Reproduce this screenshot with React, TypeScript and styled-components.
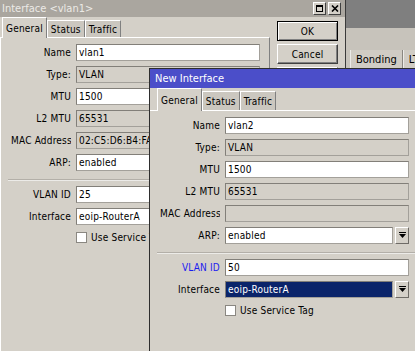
import React from "react"
import styled, { createGlobalStyle, css } from "styled-components"

const GlobalStyle = createGlobalStyle`
  html, body {
    margin: 0;
    padding: 0;
    overflow: hidden;
    background: #d4d0c8;
  }
  body {
    font-family: "DejaVu Sans Condensed", "DejaVu Sans", "Liberation Sans", sans-serif;
    font-stretch: condensed;
    font-size: 10px;
    letter-spacing: 0.2px;
    color: #000;
  }
`

const Desktop = styled.div`
  position: relative;
  width: 415px;
  height: 351px;
  overflow: hidden;
  background: #d4d0c8;
`

/* windows sit on the desktop at their own place */
const Window = styled.div<{ $x: number; $y: number; $w: number; $z: number; $active?: boolean }>`
  position: absolute;
  left: ${p => p.$x}px;
  top: ${p => p.$y}px;
  width: ${p => p.$w}px;
  bottom: 0;
  z-index: ${p => p.$z};
  display: flex;
  flex-direction: column;
  box-sizing: border-box;
  background: #d4d0c8;
  ${p =>
    p.$active
      ? css`
          border-left: 1px solid #2e2e2e;
          border-top: 1px solid #2e2e2e;
        `
      : css`
          border-right: 1px solid #3a3a3a;
        `}
`

const TitleBar = styled.div<{ $active?: boolean; $h: number }>`
  height: ${p => p.$h}px;
  flex: none;
  display: flex;
  align-items: center;
  font-size: 11px;
  letter-spacing: 0;
  white-space: nowrap;
  background: ${p => (p.$active ? "#4b4ec9" : "#aaa69f")};
  color: ${p => (p.$active ? "#ffffff" : "#eceae6")};
  padding-left: ${p => (p.$active ? 5 : 2)}px;
`

const TitleButtons = styled.div`
  margin-left: auto;
  margin-right: 4px;
  display: flex;
  gap: 2px;
`

const TitleButton = styled.div`
  width: 13px;
  height: 13px;
  box-sizing: border-box;
  background: #d4d0c8;
  border: 1px solid;
  border-color: #ffffff #404040 #404040 #ffffff;
  display: flex;
  align-items: center;
  justify-content: center;
`

const Body = styled.div`
  flex: 1;
  display: flex;
`

const TabArea = styled.div<{ $w?: number }>`
  display: flex;
  flex-direction: column;
  ${p => (p.$w ? `width: ${p.$w}px; flex: none;` : "flex: 1;")}
`

const TabRow = styled.div<{ $h: number; $pad: number }>`
  height: ${p => p.$h}px;
  display: flex;
  align-items: flex-end;
  padding-left: ${p => p.$pad}px;
`

const Tab = styled.div<{ $sel?: boolean; $h: number }>`
  box-sizing: border-box;
  height: ${p => (p.$sel ? p.$h + 1 : p.$h - 3)}px;
  margin-bottom: ${p => (p.$sel ? -1 : 0)}px;
  padding: 0 3px;
  display: flex;
  align-items: center;
  border: 1px solid;
  border-bottom: none;
  border-color: #ffffff #808080 #808080 #ffffff;
  background: ${p => (p.$sel ? "#d4d0c8" : "#cbc7bf")};
  position: relative;
  z-index: ${p => (p.$sel ? 1 : 0)};
  white-space: nowrap;
`

const Panel = styled.div<{ $edge?: boolean }>`
  flex: 1;
  border-top: 1px solid #ffffff;
  ${p =>
    p.$edge &&
    css`
      border-left: 1px solid #ffffff;
      border-right: 1px solid #808080;
    `}
  padding: 6px 0 0 10px;
  display: flex;
  flex-direction: column;
  gap: 5px;
`

const Row = styled.div`
  height: 17px;
  display: flex;
  align-items: center;
  gap: 5px;
`

const Label = styled.div<{ $blue?: boolean }>`
  width: 60px;
  flex: none;
  text-align: right;
  white-space: nowrap;
  overflow: hidden;
  color: ${p => (p.$blue ? "#1c1cf0" : "#000")};
`

const Field = styled.div<{ $w: number; $ro?: boolean; $sel?: boolean }>`
  width: ${p => p.$w}px;
  height: 17px;
  flex: none;
  box-sizing: border-box;
  border: 1px solid #a3a09a;
  border-top-color: #827f79;
  border-left-color: #827f79;
  padding: 0 2px;
  line-height: 15px;
  white-space: nowrap;
  overflow: hidden;
  background: ${p => (p.$sel ? "#0a246a" : p.$ro ? "#d4d0c8" : "#ffffff")};
  color: ${p => (p.$sel ? "#ffffff" : "#000")};
`

const Select = styled.div`
  display: flex;
  gap: 2px;
`

const DropButton = styled.div`
  width: 14px;
  height: 17px;
  box-sizing: border-box;
  border: 1px solid;
  border-color: #ffffff #6e6b66 #6e6b66 #ffffff;
  background: #d4d0c8;
  display: flex;
  align-items: center;
  justify-content: center;
`

const Separator = styled.div`
  height: 0;
  border-top: 1px solid #b3afa8;
  border-bottom: 1px solid #ecebe8;
  margin: 3px 0 0 -3px;
`

const CheckRow = styled.div`
  height: 13px;
  display: flex;
  align-items: center;
  padding-left: 65px;
  margin-top: 1px;
  gap: 4px;
  white-space: nowrap;
`

const Checkbox = styled.div`
  width: 11px;
  height: 11px;
  box-sizing: border-box;
  border: 1px solid #8a8781;
  background: #ffffff;
`

const ButtonColumn = styled.div`
  display: flex;
  flex-direction: column;
  gap: 3px;
  padding: 4px 0 0 7px;
`

const Button = styled.div<{ $default?: boolean }>`
  width: 61px;
  height: 20px;
  box-sizing: border-box;
  display: flex;
  align-items: center;
  justify-content: center;
  background: #d4d0c8;
  border: 1px solid;
  border-color: ${p => (p.$default ? "#000" : "#ffffff #404040 #404040 #ffffff")};
  box-shadow: ${p =>
    p.$default ? "inset 1px 1px #ffffff, inset -1px -1px #808080" : "inset -1px -1px #808080"};
`

const ListTop = styled.div`
  height: 28px;
  background: #7f7f7f;
`

const ListBar = styled.div`
  height: 20px;
  background: #c7c3bb;
`

const ListTabs = styled.div`
  height: 20px;
  display: flex;
  align-items: flex-end;
  padding-left: 4px;
  background: #c7c3bb;
`

const ListTab = styled.div`
  height: 18px;
  box-sizing: border-box;
  padding: 0 5px;
  display: flex;
  align-items: center;
  border-left: 1px solid #ecebe8;
  border-right: 1px solid #8a8781;
  background: #d0ccc4;
  font-size: 11px;
  letter-spacing: 0;
  white-space: nowrap;
`

const DropIcon = () => (
  <svg width="7" height="7" viewBox="0 0 7 7">
    <rect x="0" y="0" width="7" height="1" fill="#000" />
    <polygon points="0,2 7,2 3.5,6" fill="#000" />
  </svg>
)

interface IFormProps {
  name: string
  mtu: string
  mac: string
  vlanId: string
  active?: boolean
}

const InterfaceForm: React.FC<IFormProps> = ({ name, mtu, mac, vlanId, active }) => (
  <>
    <Row>
      <Label>Name</Label>
      <Field $w={184}>{name}</Field>
    </Row>
    <Row>
      <Label>Type:</Label>
      <Field $w={184} $ro>
        VLAN
      </Field>
    </Row>
    <Row>
      <Label>MTU</Label>
      <Field $w={184}>{mtu}</Field>
    </Row>
    <Row>
      <Label>L2 MTU</Label>
      <Field $w={184} $ro>
        65531
      </Field>
    </Row>
    <Row>
      <Label>MAC Address</Label>
      <Field $w={184} $ro>
        {mac}
      </Field>
    </Row>
    <Row>
      <Label>ARP:</Label>
      <Select>
        <Field $w={168}>enabled</Field>
        <DropButton>
          <DropIcon />
        </DropButton>
      </Select>
    </Row>
    <Separator />
    <Row>
      <Label $blue={active}>VLAN ID</Label>
      <Field $w={184}>{vlanId}</Field>
    </Row>
    <Row>
      <Label>Interface</Label>
      <Select>
        <Field $w={168} $sel={active}>
          eoip-RouterA
        </Field>
        <DropButton>
          <DropIcon />
        </DropButton>
      </Select>
    </Row>
    <CheckRow>
      <Checkbox />
      Use Service Tag
    </CheckRow>
  </>
)

const App: React.FC = () => (
  <Desktop>
    <GlobalStyle />

    <Window $x={346} $y={0} $w={90} $z={0}>
      <ListTop />
      <ListBar />
      <ListTabs>
        <ListTab>Bonding</ListTab>
        <ListTab>LTE</ListTab>
      </ListTabs>
    </Window>

    <Window $x={0} $y={0} $w={346} $z={1}>
      <TitleBar $h={17}>
        Interface &lt;vlan1&gt;
        <TitleButtons>
          <TitleButton>
            <svg width="7" height="7" viewBox="0 0 7 7">
              <rect x="0.5" y="0.5" width="6" height="6" fill="none" stroke="#000" />
              <rect x="0" y="0" width="7" height="2" fill="#000" />
            </svg>
          </TitleButton>
          <TitleButton>
            <svg width="8" height="7" viewBox="0 0 8 7">
              <path d="M1 0.5 L7 6.5 M7 0.5 L1 6.5" stroke="#000" strokeWidth="1.6" />
            </svg>
          </TitleButton>
        </TitleButtons>
      </TitleBar>
      <Body>
        <TabArea $w={270}>
          <TabRow $h={20} $pad={2}>
            <Tab $sel $h={20}>General</Tab>
            <Tab $h={20}>Status</Tab>
            <Tab $h={20}>Traffic</Tab>
          </TabRow>
          <Panel $edge>
            <InterfaceForm name="vlan1" mtu="1500" mac="02:C5:D6:B4:FA:7C" vlanId="25" />
          </Panel>
        </TabArea>
        <ButtonColumn>
          <Button $default>OK</Button>
          <Button>Cancel</Button>
          <Button>Apply</Button>
          <Button>Disable</Button>
          <Button>Comment</Button>
          <Button>Copy</Button>
          <Button>Remove</Button>
          <Button>Torch</Button>
        </ButtonColumn>
      </Body>
    </Window>

    <Window $x={149} $y={68} $w={290} $z={2} $active>
      <TitleBar $active $h={19}>
        New Interface
      </TitleBar>
      <TabArea>
        <TabRow $h={22} $pad={7}>
          <Tab $sel $h={22}>General</Tab>
          <Tab $h={22}>Status</Tab>
          <Tab $h={22}>Traffic</Tab>
        </TabRow>
        <Panel>
          <InterfaceForm name="vlan2" mtu="1500" mac="" vlanId="50" active />
        </Panel>
      </TabArea>
    </Window>
  </Desktop>
)

export default App
